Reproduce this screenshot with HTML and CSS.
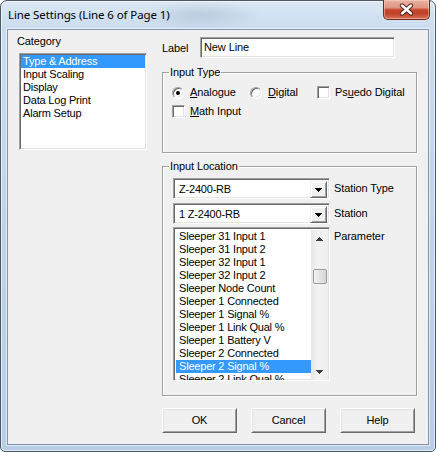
FILE: index.html
```html
<!DOCTYPE html>
<html>
<head>
<meta charset="utf-8">
<link rel="stylesheet" href="styles.css">
</head>
<body>
<div class="window">
  <div class="titlebar">
    <span class="title">Line Settings (Line 6 of Page 1)</span>
    <div class="close">
      <svg width="47" height="20" viewBox="0 0 47 20">
        <path d="M19 6.5 L28 14.5 M28 6.5 L19 14.5" stroke="#5b2016" stroke-width="4.4" stroke-linecap="round" fill="none"/>
        <path d="M19 6.5 L28 14.5 M28 6.5 L19 14.5" stroke="#ffffff" stroke-width="2.4" stroke-linecap="round" fill="none"/>
      </svg>
    </div>
  </div>
  <div class="client">
    <div class="left">
      <div class="cat-label">Category</div>
      <div class="sunken cat-list">
        <div class="item sel">Type &amp; Address</div>
        <div class="item">Input Scaling</div>
        <div class="item">Display</div>
        <div class="item">Data Log Print</div>
        <div class="item">Alarm Setup</div>
      </div>
    </div>
    <div class="right">
      <div class="label-row">
        <span class="lbl">Label</span>
        <div class="sunken textbox">New Line</div>
      </div>

      <div class="group type">
        <div class="group-title">Input Type</div>
        <div class="opt-row first">
          <div class="opt w1"><span class="radio on"></span><span class="otext"><u>A</u>nalogue</span></div>
          <div class="opt w2"><span class="radio"></span><span class="otext"><u>D</u>igital</span></div>
          <div class="opt"><span class="chk"></span><span class="otext ctext">Ps<u>u</u>edo Digital</span></div>
        </div>
        <div class="opt-row second">
          <div class="opt"><span class="chk"></span><span class="otext ctext"><u>M</u>ath Input</span></div>
        </div>
      </div>

      <div class="group loc">
        <div class="group-title">Input Location</div>
        <div class="combo-row r1">
          <div class="sunken combo">
            <span class="ctxt">Z-2400-RB</span>
            <span class="drop"><svg width="7" height="4" viewBox="0 0 7 4"><path d="M0 0h7v1h-1v1h-1v1h-1v1h-1v-1h-1v-1h-1v-1h-1z" fill="#000"/></svg></span>
          </div>
          <span class="side">Station Type</span>
        </div>
        <div class="combo-row r2">
          <div class="sunken combo">
            <span class="ctxt">1 Z-2400-RB</span>
            <span class="drop"><svg width="7" height="4" viewBox="0 0 7 4"><path d="M0 0h7v1h-1v1h-1v1h-1v1h-1v-1h-1v-1h-1v-1h-1z" fill="#000"/></svg></span>
          </div>
          <span class="side">Station</span>
        </div>
        <div class="param-row">
          <div class="sunken plist">
            <div class="pitems">
              <div class="item">Sleeper 31 Input 1</div>
              <div class="item">Sleeper 31 Input 2</div>
              <div class="item">Sleeper 32 Input 1</div>
              <div class="item">Sleeper 32 Input 2</div>
              <div class="item">Sleeper Node Count</div>
              <div class="item">Sleeper 1 Connected</div>
              <div class="item">Sleeper 1 Signal %</div>
              <div class="item">Sleeper 1 Link Qual %</div>
              <div class="item">Sleeper 1 Battery V</div>
              <div class="item">Sleeper 2 Connected</div>
              <div class="item sel">Sleeper 2 Signal %</div>
              <div class="item">Sleeper 2 Link Qual %</div>
            </div>
            <div class="vscroll">
              <div class="sbtn"><svg width="7" height="4" viewBox="0 0 7 4"><path d="M3 0h1v1h1v1h1v1h1v1h-7v-1h1v-1h1v-1h1z" fill="#3c3c3c"/></svg></div>
              <div class="thumb"></div>
              <div class="sbtn down"><svg width="7" height="4" viewBox="0 0 7 4"><path d="M0 0h7v1h-1v1h-1v1h-1v1h-1v-1h-1v-1h-1v-1h-1z" fill="#3c3c3c"/></svg></div>
            </div>
          </div>
          <span class="side param">Parameter</span>
        </div>
      </div>

      <div class="buttons">
        <div class="btn">OK</div>
        <div class="btn">Cancel</div>
        <div class="btn">Help</div>
      </div>
    </div>
  </div>
</div>
</body>
</html>
```

FILE: styles.css
```css
* { box-sizing: border-box; }
html, body { margin: 0; padding: 0; }
body {
  width: 436px;
  height: 452px;
  overflow: hidden;
  background: #ffffff;
  font-family: "Liberation Sans", Arial, sans-serif;
  font-size: 11px;
  letter-spacing: -0.1px;
  color: #000;
}

.window {
  width: 436px;
  height: 452px;
  border: 1px solid #4a5868;
  border-radius: 7px 7px 5px 5px;
  background:
    radial-gradient(ellipse 60px 14px at 200px 14px, rgba(120,140,165,0.25), rgba(120,140,165,0) 100%),
    linear-gradient(180deg, #dbe7f4 0, #cadcef 28px, #bed3ea 55%, #b8cee7 100%);
  box-shadow: inset 0 0 0 1px rgba(255,255,255,0.6);
  padding: 0 6px 6px 6px;
  display: flex;
  flex-direction: column;
}

.titlebar {
  height: 28px;
  display: flex;
  align-items: flex-start;
  padding: 0 0 0 1px;
}
.title {
  font-family: "Noto Sans", "Open Sans", sans-serif;
  font-size: 11.5px;
  letter-spacing: -0.1px;
  line-height: 16px;
  margin-top: 6px;
  color: #000;
  white-space: nowrap;
}
.close {
  margin-left: auto;
  margin-top: -1px;
  margin-right: -1px;
  width: 47px;
  height: 20px;
  border: 1px solid #6e2a1f;
  border-top: none;
  border-radius: 0 0 5px 5px;
  background: linear-gradient(180deg, #eab2a3 0%, #df9583 40%, #c8452d 52%, #c0432b 72%, #d97258 100%);
  box-shadow: inset 0 0 0 1px rgba(255,220,210,0.45);
  overflow: hidden;
}
.close svg { display: block; margin: -1px 0 0 -1px; }

.client {
  height: 416px;
  border: 1px solid #8194aa;
  box-shadow: 0 0 0 1px rgba(255,255,255,0.55);
  background: #f0f0f0;
  display: flex;
  padding-left: 9px;
}

/* 3D sunken edge */
.sunken {
  background: #ffffff;
  border: 1px solid;
  border-color: #a0a0a0 #ffffff #ffffff #a0a0a0;
  box-shadow: inset 1px 1px 0 #696969, inset -1px -1px 0 #e3e3e3;
  padding: 1px;
}

.left { width: 130px; padding-top: 5px; }
.cat-label { height: 13px; line-height: 13px; }
.cat-list {
  margin: 5px 0 0 2px;
  width: 128px;
  height: 97px;
  overflow: hidden;
}
.item {
  height: 13px;
  line-height: 13px;
  white-space: nowrap;
  padding-left: 2px;
  letter-spacing: -0.2px;
}
.item.sel { background: #3399ff; color: #fff; }

.right {
  margin-left: 15px;
  width: 255px;
  display: flex;
  flex-direction: column;
}
.label-row {
  margin-top: 7px;
  height: 21px;
  display: flex;
  align-items: center;
}
.lbl { width: 38px; }
.textbox {
  width: 195px;
  height: 21px;
  line-height: 13px;
  padding: 3px 2px 0 3px;
}

.group {
  border: 1px solid #a0a0a0;
  box-shadow: inset 1px 1px 0 #ffffff, 1px 1px 0 #ffffff;
  display: flex;
  flex-direction: column;
  align-items: flex-start;
}
.group-title {
  margin: -7px 0 0 6px;
  padding: 0 1px;
  height: 13px;
  line-height: 13px;
  background: #f0f0f0;
}
.group.type { margin-top: 14px; height: 81px; }
.group.loc { margin-top: 13px; height: 230px; }

.opt-row {
  display: flex;
  align-items: center;
  height: 13px;
  margin-left: 9px;
}
.opt-row.first { margin-top: 7px; }
.opt-row.second { margin-top: 6px; }
.opt { display: flex; align-items: center; height: 13px; }
.opt.w1 { width: 78px; }
.opt.w2 { width: 67px; }
.otext { margin-left: 6px; line-height: 13px; white-space: nowrap; }
.ctext { margin-left: 5px; }
.otext u { text-decoration-thickness: 1px; text-underline-offset: 1px; }

.radio {
  width: 12px;
  height: 12px;
  border-radius: 50%;
  background: #fff;
  border: 1px solid;
  border-color: #a0a0a0 #ffffff #ffffff #a0a0a0;
  box-shadow: inset 1px 1px 0 #696969, inset -1px -1px 0 #e3e3e3;
  display: flex;
  align-items: center;
  justify-content: center;
}
.radio.on::after {
  content: "";
  width: 4px;
  height: 4px;
  border-radius: 50%;
  background: #000;
}
.chk {
  width: 13px;
  height: 13px;
  background: #fff;
  border: 1px solid;
  border-color: #a0a0a0 #ffffff #ffffff #a0a0a0;
  box-shadow: inset 1px 1px 0 #696969, inset -1px -1px 0 #e3e3e3;
}

.combo-row {
  display: flex;
  align-items: center;
  margin-left: 10px;
  height: 21px;
}
.combo-row.r1 { margin-top: 5px; }
.combo-row.r2 { margin-top: 4px; }
.combo {
  width: 157px;
  height: 21px;
  display: flex;
  padding: 1px;
}
.ctxt {
  flex: 1;
  line-height: 17px;
  padding-left: 3px;
  margin-left: 1px;
  margin-top: 1px;
  letter-spacing: -0.2px;
}
.drop {
  width: 17px;
  height: 17px;
  margin: 1px 1px 0 0;
  background: #f0f0f0;
  border: 1px solid;
  border-color: #f0f0f0 #696969 #696969 #f0f0f0;
  box-shadow: inset 1px 1px 0 #ffffff, inset -1px -1px 0 #a0a0a0;
  display: flex;
  align-items: center;
  justify-content: center;
}
.drop svg { display: block; margin-top: 1px; }
.side { margin-left: 4px; line-height: 13px; white-space: nowrap; }

.param-row {
  display: flex;
  align-items: flex-start;
  margin-left: 10px;
  margin-top: 3px;
}
.plist {
  width: 157px;
  height: 154px;
  display: flex;
  padding: 1px;
}
.pitems {
  width: 136px;
  height: 150px;
  margin: 1px 0 0 1px;
  overflow: hidden;
}
.pitems .item { padding-left: 3px; }
.vscroll {
  width: 17px;
  height: 150px;
  margin-top: 1px;
  background: linear-gradient(90deg, #e6e6e6, #f2f2f2 40%, #eeeeee);
  display: flex;
  flex-direction: column;
}
.sbtn {
  height: 17px;
  display: flex;
  align-items: center;
  justify-content: center;
}
.sbtn svg { display: block; }
.thumb {
  width: 14px;
  height: 15px;
  margin: 22px 0 0 2px;
  border: 1px solid #9c9c9c;
  border-radius: 2px;
  background: linear-gradient(90deg, #f4f4f4, #e4e4e4 50%, #d6d6d6);
}
.sbtn.down { margin-top: auto; }
.side.param { margin-top: 3px; }

.buttons {
  margin-top: 12px;
  display: flex;
  gap: 14px;
}
.btn {
  width: 75px;
  height: 25px;
  background: #f0f0f0;
  border: 1px solid;
  border-color: #ffffff #696969 #696969 #ffffff;
  box-shadow: inset 1px 1px 0 #e3e3e3, inset -1px -1px 0 #a0a0a0;
  display: flex;
  align-items: center;
  justify-content: center;
  line-height: 13px;
}
```
